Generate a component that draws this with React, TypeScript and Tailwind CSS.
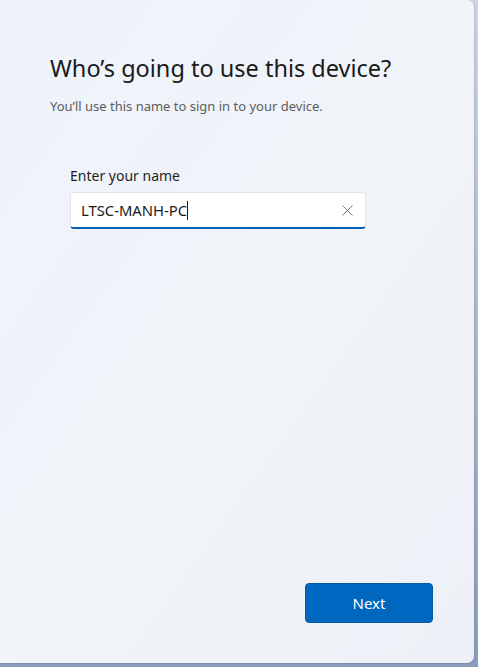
import { X } from "lucide-react";

export default function App() {
  return (
    <div
      className="w-[478px] h-[667px] bg-gradient-to-b from-[#c9d7e8] to-[#8d9dbd]"
      style={{ fontFamily: '"Noto Sans", "Open Sans", sans-serif' }}
    >
      <div className="flex flex-col w-[474px] h-[663px] rounded-r-[7px] bg-gradient-to-br from-[#eef3fb] via-[#f1f4f9] to-[#eef0f7] shadow-[1px_1px_2px_rgba(0,0,0,0.12)]">
        <div className="pl-[50px] pt-[52px]">
          <h1 className="text-[23.5px] leading-[32px] text-[#1a1a1a]">
            Who’s going to use this device?
          </h1>
          <p className="mt-[13px] text-[13px] leading-[18px] text-[#5c5c5c]">
            You’ll use this name to sign in to your device.
          </p>
        </div>

        <div className="pl-[70px] pt-[51px]">
          <label className="block text-[14px] leading-[20px] text-[#1f1f1f]">
            Enter your name
          </label>
          <div className="mt-[6px] flex items-center w-[296px] h-[37px] bg-white rounded-[4px] border border-[#e5e5e5] border-b-2 border-b-[#005fb8] pl-[10px] pr-[8px]">
            <span className="text-[14.8px] text-[#1a1a1a]">LTSC-MANH-PC</span>
            <span className="w-px h-[19px] bg-[#1a1a1a]" />
            <div className="flex-1" />
            <X className="w-[19px] h-[19px] text-[#6a6a6a]" strokeWidth={1.1} />
          </div>
        </div>

        <div className="flex-1" />

        <div className="flex justify-end pr-[41px] pb-[40px]">
          <button className="w-[128px] h-[40px] rounded-[4px] bg-[#0067c0] border border-[#0a5aa6] text-white text-[15px]">
            Next
          </button>
        </div>
      </div>
    </div>
  );
}
